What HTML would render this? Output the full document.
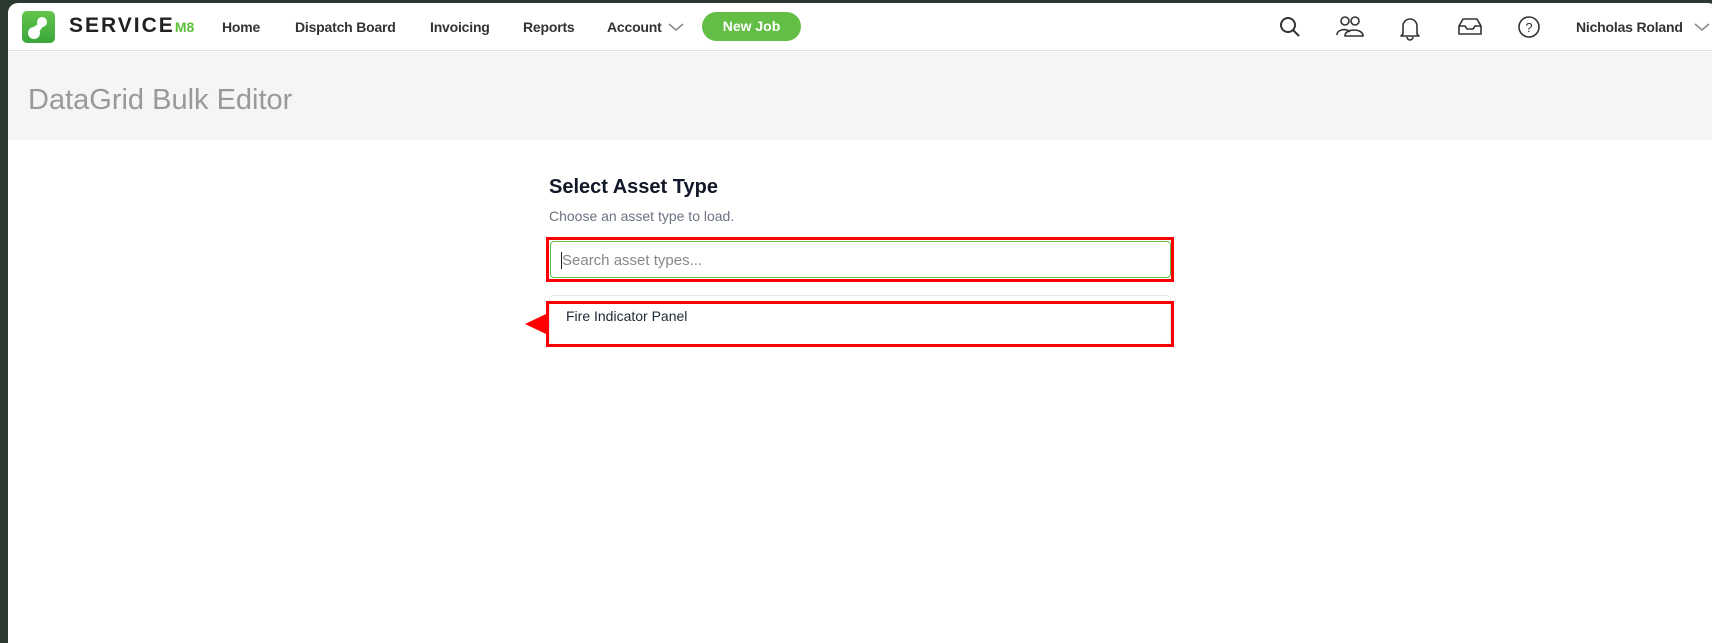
<!DOCTYPE html>
<html><head><meta charset="utf-8"><style>
*{box-sizing:border-box;margin:0;padding:0}
body{width:1712px;height:630px;background:#2b3a31;overflow:hidden;font-family:"Liberation Sans",sans-serif;position:relative}
.win{position:absolute;left:8px;top:3px;width:1710px;height:640px;background:#fff;border-radius:10px 10px 0 0;overflow:hidden}
.nav{position:absolute;left:0;top:0;width:100%;height:48px;border-bottom:1px solid #e6e6e6}
.nav .t{position:absolute;top:16px;font-size:14px;font-weight:bold;color:#333;letter-spacing:-0.2px}
.logo{position:absolute;left:14px;top:8px;width:33px;height:32px;border-radius:5px;background:linear-gradient(#63c54a,#3aa63a)}
.brand{position:absolute;left:61px;top:11px;font-size:21px;font-weight:bold;letter-spacing:2px;color:#222}
.brand span{color:#5cbf3a;font-size:14px;letter-spacing:0}
.btn{position:absolute;left:694px;top:9px;width:99px;height:29px;border-radius:15px;background:#62be45;color:#fff;font-weight:bold;font-size:14px;text-align:center;line-height:29px}
.ic{position:absolute;top:12px}
.band{position:absolute;left:0;top:49px;width:100%;height:88px;background:#f5f5f5}
.band h1{position:absolute;left:20px;top:32px;font-size:29px;font-weight:normal;color:#999}
.red{position:absolute;border:3px solid #f00}
</style></head><body>
<div class="win">
<div class="nav">
<div class="logo"><svg width="33" height="32"><circle cx="20" cy="11" r="5" fill="#fff"/><circle cx="12" cy="22" r="6" fill="#fff"/><path d="M16 13L22 14L17 21L10 17Z" fill="#fff"/></svg></div>
<div class="brand">SERVICE<span>M8</span></div>
<div class="t" style="left:214px">Home</div>
<div class="t" style="left:287px">Dispatch Board</div>
<div class="t" style="left:422px">Invoicing</div>
<div class="t" style="left:515px">Reports</div>
<div class="t" style="left:599px">Account</div>
<svg class="ic" style="left:660px;top:19px" width="16" height="10"><path d="M1 2l7 6 7-6" stroke="#888" fill="none" stroke-width="1.5"/></svg>
<div class="btn">New Job</div>
<svg class="ic" style="left:1270px" width="24" height="24"><circle cx="10" cy="10" r="7" stroke="#333" stroke-width="2" fill="none"/><path d="M15 15l6 6" stroke="#333" stroke-width="2"/></svg>
<svg class="ic" style="left:1327px" width="30" height="24"><circle cx="10" cy="6" r="4" stroke="#333" stroke-width="1.6" fill="none"/><circle cx="20" cy="6" r="4" stroke="#333" stroke-width="1.6" fill="none"/><path d="M2 20c0-6 10-7 13-3M10 21c0-8 18-8 18 0z" stroke="#333" stroke-width="1.6" fill="none"/></svg>
<svg class="ic" style="left:1390px" width="24" height="26"><path d="M5 19V11a7 7 0 0 1 14 0v8l2 2H3z" stroke="#333" stroke-width="1.6" fill="none" stroke-linejoin="round"/><path d="M9 22a3 3 0 0 0 6 0" stroke="#333" stroke-width="1.6" fill="none"/></svg>
<svg class="ic" style="left:1449px;top:14px" width="26" height="20"><path d="M2 9L6 2h14l4 7v8H2zM2 9h6l2 3h6l2-3h6" stroke="#333" stroke-width="1.6" fill="none" stroke-linejoin="round"/></svg>
<svg class="ic" style="left:1509px" width="24" height="24"><circle cx="12" cy="12" r="10" stroke="#333" stroke-width="1.6" fill="none"/><text x="12" y="17" text-anchor="middle" font-size="13" font-family="Liberation Sans" fill="#333">?</text></svg>
<div class="t" style="left:1568px">Nicholas Roland</div>
<svg class="ic" style="left:1686px;top:19px" width="16" height="10"><path d="M1 2l7 6 7-6" stroke="#888" fill="none" stroke-width="1.5"/></svg>
</div>
<div class="band"><h1>DataGrid Bulk Editor</h1></div>
<div style="position:absolute;left:541px;top:173px;font-size:20px;font-weight:bold;color:#111827">Select Asset Type</div>
<div style="position:absolute;left:541px;top:205px;font-size:14px;color:#6b7280">Choose an asset type to load.</div>
<div class="red" style="left:538px;top:234px;width:628px;height:45px"></div>
<div style="position:absolute;left:542px;top:238px;width:621px;height:37px;border:1px solid #62be45;border-radius:4px"></div>
<div style="position:absolute;left:553px;top:249px;width:1px;height:17px;background:#222"></div>
<div style="position:absolute;left:554px;top:249px;font-size:15px;color:#888">Search asset types...</div>
<div style="position:absolute;left:541px;top:292px;width:622px;height:50px;border:1px solid #e3e5ea;border-radius:5px"></div>
<div class="red" style="left:538px;top:298px;width:628px;height:46px"></div>
<div style="position:absolute;left:558px;top:305px;font-size:14px;color:#1f2937">Fire Indicator Panel</div>
<svg style="position:absolute;left:517px;top:311px" width="22" height="20"><path d="M0 10L21 0V20z" fill="#f00"/></svg>
</div>
</body></html>
